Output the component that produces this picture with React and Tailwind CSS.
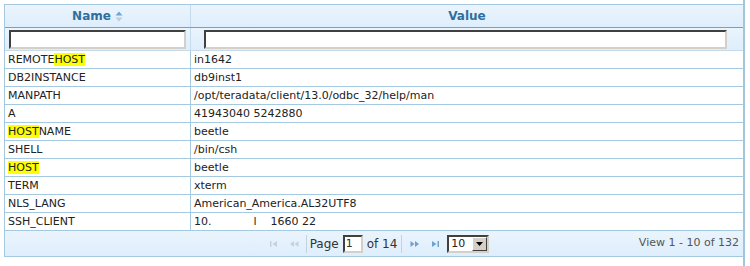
import { useState } from "react";

const rows = [
  { name: ["REMOTE", "HOST", ""], value: "in1642" },
  { name: ["DB2INSTANCE"], value: "db9inst1" },
  { name: ["MANPATH"], value: "/opt/teradata/client/13.0/odbc_32/help/man" },
  { name: ["A"], value: "41943040 5242880" },
  { name: ["", "HOST", "NAME"], value: "beetle" },
  { name: ["SHELL"], value: "/bin/csh" },
  { name: ["", "HOST", ""], value: "beetle" },
  { name: ["TERM"], value: "xterm" },
  { name: ["NLS_LANG"], value: "American_America.AL32UTF8" },
  { name: ["SSH_CLIENT"], value: "10.            l    1660 22" },
];

function NameCell({ parts }) {
  return (
    <span>
      {parts.map((p, i) =>
        i === 1 ? (
          <span key={i} className="bg-[#ffff00]">
            {p}
          </span>
        ) : (
          <span key={i}>{p}</span>
        )
      )}
    </span>
  );
}

function PagerIcon({ kind, color }) {
  // small pager glyphs: first / prev / next / last
  return (
    <svg width="10" height="8" viewBox="0 0 10 8" fill={color}>
      {kind === "first" && (
        <>
          <rect x="1" y="1" width="1.5" height="6" />
          <path d="M8 1 L3.5 4 L8 7 Z" />
        </>
      )}
      {kind === "prev" && (
        <>
          <path d="M5 1 L1 4 L5 7 Z" />
          <path d="M9.5 1 L5.5 4 L9.5 7 Z" />
        </>
      )}
      {kind === "next" && (
        <>
          <path d="M0.5 1 L4.5 4 L0.5 7 Z" />
          <path d="M5 1 L9 4 L5 7 Z" />
        </>
      )}
      {kind === "last" && (
        <>
          <path d="M2 1 L6.5 4 L2 7 Z" />
          <rect x="7.5" y="1" width="1.5" height="6" />
        </>
      )}
    </svg>
  );
}

export default function App() {
  const [nameFilter, setNameFilter] = useState("");
  const [valueFilter, setValueFilter] = useState("");

  return (
    <div
      className="w-[745px] h-[266px] bg-white pt-[4px] pl-[4px] border-r-2 border-[#a3c4df] text-[11px] text-[#222]"
      style={{ fontFamily: '"DejaVu Sans", Verdana, sans-serif' }}
    >
      <div className="w-[739px] border border-r-0 border-[#a6c9e2]">
        {/* Header */}
        <div className="flex h-[23px] bg-gradient-to-b from-[#eaf4fd] to-[#dfeefc] border-b border-[#8e9aa6]">
          <div className="w-[186px] flex items-center justify-center gap-[4px] border-r border-[#c5dbec] font-bold text-[12px] text-[#2e6e9e]">
            Name
            <svg width="8" height="11" viewBox="0 0 8 11">
              <path d="M4 0.5 L7.5 4.5 L0.5 4.5 Z" fill="#6ea6d6" />
              <path d="M4 10.5 L7.5 6.5 L0.5 6.5 Z" fill="#b7cfe3" />
            </svg>
          </div>
          <div className="flex-1 flex items-center justify-center font-bold text-[12px] text-[#2e6e9e]">
            Value
          </div>
        </div>

        {/* Filter row */}
        <div className="flex h-[23px] bg-gradient-to-b from-[#eaf4fd] to-[#dfeefc] border-b border-[#c5dbec]">
          <div className="w-[186px] flex items-center border-r border-[#c5dbec]">
            <input
              value={nameFilter}
              onChange={(e) => setNameFilter(e.target.value)}
              className="ml-[4px] w-[177px] h-[19px] bg-white outline-none border-2 border-t-[#404040] border-l-[#404040] border-b-[#d4d0c8] border-r-[#d4d0c8] px-1 text-[11px]"
            />
          </div>
          <div className="flex-1 flex items-center">
            <input
              value={valueFilter}
              onChange={(e) => setValueFilter(e.target.value)}
              className="ml-[13px] w-[523px] h-[19px] bg-white outline-none border-2 border-t-[#404040] border-l-[#404040] border-b-[#d4d0c8] border-r-[#d4d0c8] px-1 text-[11px]"
            />
          </div>
        </div>

        {/* Rows */}
        {rows.map((r, i) => (
          <div key={i} className="flex h-[18px] border-b border-[#a6c9e2] bg-white">
            <div className="w-[186px] pl-[3px] pt-[1px] flex items-center border-r border-[#a6c9e2] whitespace-nowrap">
              <NameCell parts={r.name} />
            </div>
            <div className="flex-1 pl-[3px] pt-[1px] flex items-center whitespace-pre">{r.value}</div>
          </div>
        ))}

        {/* Footer / pager */}
        <div className="relative flex items-center h-[25px] bg-gradient-to-b from-[#eaf4fd] to-[#dfeefc]">
          <div className="flex-1 flex items-center justify-center pl-[10px]">
            <div className="flex items-center gap-[10px] pr-[4px]">
              <PagerIcon kind="first" color="#c3d3e2" />
              <PagerIcon kind="prev" color="#c3d3e2" />
            </div>
            <div className="w-px h-[18px] bg-[#c5d3e0] mx-[3px]" />
            <div className="flex items-center gap-[4px] text-[12px] text-[#333]">
              <span>Page</span>
              <input
                readOnly
                value="1"
                className="w-[20px] h-[18px] bg-white outline-none border-2 border-t-[#404040] border-l-[#404040] border-b-[#d4d0c8] border-r-[#d4d0c8] px-[1px] text-[11px]"
              />
              <span>of 14</span>
            </div>
            <div className="w-px h-[18px] bg-[#c5d3e0] mx-[4px]" />
            <div className="flex items-center gap-[10px] pl-[4px] pr-[3px]">
              <PagerIcon kind="next" color="#6da3d3" />
              <PagerIcon kind="last" color="#6da3d3" />
            </div>
            <div className="ml-[4px] w-[42px] h-[18px] flex bg-white border-2 border-t-[#404040] border-l-[#404040] border-b-[#d4d0c8] border-r-[#d4d0c8]">
              <span className="flex-1 pl-[2px] leading-[14px] text-[11px]">10</span>
              <div className="w-[15px] bg-[#d4d0c8] flex items-center justify-center border border-t-white border-l-white border-b-[#404040] border-r-[#404040]">
                <svg width="7" height="4" viewBox="0 0 7 4">
                  <path d="M0 0 L7 0 L3.5 4 Z" fill="#000" />
                </svg>
              </div>
            </div>
          </div>
          <div className="absolute right-[4px] top-0 h-full flex items-center text-[#555]">
            View 1 - 10 of 132
          </div>
        </div>
      </div>
    </div>
  );
}
